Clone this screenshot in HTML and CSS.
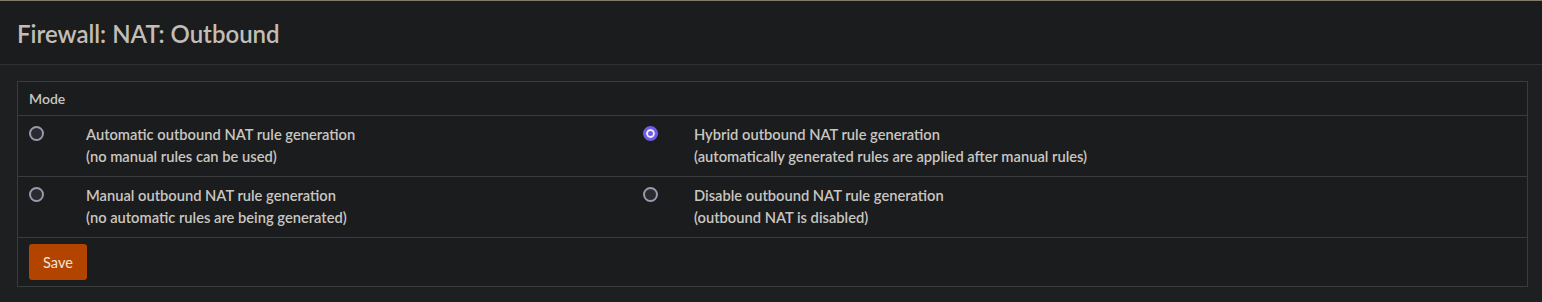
FILE: index.html
```html
<!DOCTYPE html>
<html lang="en">
<head>
<meta charset="utf-8">
<title>Firewall: NAT: Outbound</title>
<link rel="stylesheet" href="styles.css">
</head>
<body>
<header class="page-header">
  <h1 class="page-title">Firewall: NAT: Outbound</h1>
</header>
<main class="content">
  <form class="mode-table">
    <div class="mode-head">Mode</div>
    <div class="mode-row">
      <div class="cell radio-cell"><input type="radio" name="mode" class="radio"></div>
      <div class="cell text-cell">Automatic outbound NAT rule generation<br>(no manual rules can be used)</div>
      <div class="cell radio-cell"><input type="radio" name="mode" class="radio" checked></div>
      <div class="cell text-cell">Hybrid outbound NAT rule generation<br>(automatically generated rules are applied after manual rules)</div>
    </div>
    <div class="mode-row">
      <div class="cell radio-cell"><input type="radio" name="mode" class="radio"></div>
      <div class="cell text-cell">Manual outbound NAT rule generation<br>(no automatic rules are being generated)</div>
      <div class="cell radio-cell"><input type="radio" name="mode" class="radio"></div>
      <div class="cell text-cell">Disable outbound NAT rule generation<br>(outbound NAT is disabled)</div>
    </div>
    <div class="mode-actions">
      <button type="button" class="btn-save">Save</button>
    </div>
  </form>
</main>
</body>
</html>
```

FILE: styles.css
```css
html, body {
  margin: 0;
  padding: 0;
}
body {
  background: #1e1f21;
  color: #c9c6c0;
  font-family: "Lato", "Liberation Sans", sans-serif;
  font-size: 14px;
  height: 302px;
  overflow: hidden;
}
.page-header {
  border-top: 1px solid #85796a;
  background: #1b1c1e;
  height: 63px;
  border-bottom: 1px solid #2f3032;
  display: flex;
  align-items: center;
  padding-left: 17px;
}
.page-title {
  margin: 0;
  font-size: 24px;
  font-weight: 600;
  color: #c2beb7;
  padding-top: 2px;
}
.content {
  padding: 16px 14px 0 17px;
}
.mode-table {
  border: 1px solid #3a3b3d;
  background: #1b1c1e;
  margin: 0;
}
.mode-head {
  height: 33px;
  line-height: 34px;
  padding-left: 11px;
  border-bottom: 1px solid #3a3b3d;
  font-weight: 600;
  font-size: 14px;
}
.mode-row {
  display: grid;
  grid-template-columns: 57px 557px 51px 1fr;
  padding: 7px 0 9px;
  border-bottom: 1px solid #3a3b3d;
  line-height: 22px;
}
.cell {
  padding: 0 11px;
}
.text-cell {
  font-weight: 600;
  font-size: 14.7px;
  white-space: nowrap;
}
.radio-cell {
  display: flex;
  align-items: flex-start;
}
.radio {
  appearance: none;
  -webkit-appearance: none;
  box-sizing: border-box;
  margin: 3px 0 0 0;
  width: 15px;
  height: 15px;
  border-radius: 50%;
  border: 2px solid #9a98aa;
  background: #2a2a31;
}
.radio:checked {
  border: 3px solid #6e5ce6;
  background: #6e5ce6;
  box-shadow: inset 0 0 0 2px #f1effc;
}
.mode-actions {
  padding: 6px 11px;
}
.btn-save {
  display: block;
  height: 36px;
  width: 58px;
  border: 0;
  border-radius: 3px;
  background: #b34400;
  color: #f1e4d8;
  font-family: inherit;
  font-size: 14.5px;
  padding: 0;
  cursor: pointer;
}
```
